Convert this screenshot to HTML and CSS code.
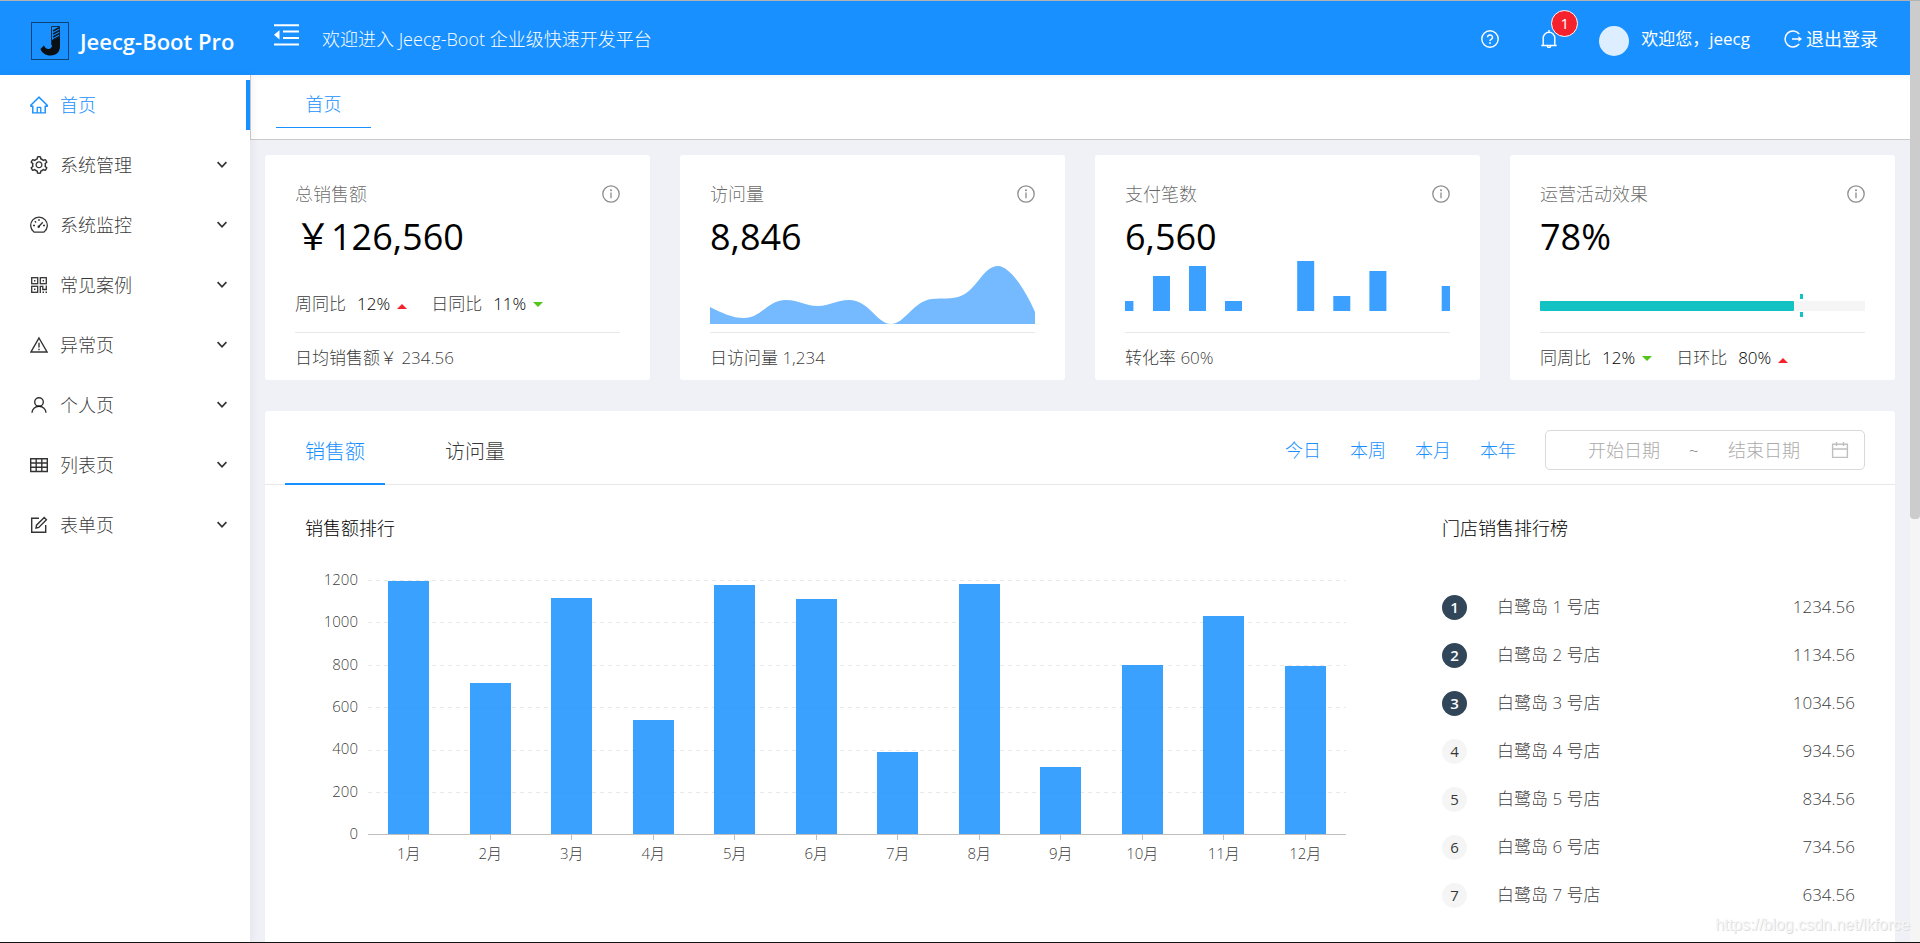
FILE: index.html
```html
<!DOCTYPE html>
<html lang="zh-CN">
<head>
<meta charset="utf-8">
<title>Jeecg-Boot Pro</title>
<link rel="stylesheet" href="styles.css">
</head>
<body>
<svg class="sprite" aria-hidden="true">
  <symbol id="i-info" viewBox="0 0 18 18"><g fill="none" stroke="currentColor" stroke-width="1.3"><circle cx="9" cy="9" r="8.2"/><path d="M9 7.6v5.6"/></g><circle cx="9" cy="5.3" r="1" fill="currentColor"/></symbol>
  <symbol id="i-down" viewBox="0 0 10 8"><path d="M.6 1.2 5 5.8 9.4 1.2" fill="none" stroke="currentColor" stroke-width="1.7"/></symbol>
</svg>
<div class="viewport">
  <div class="app">
    <header class="header">
      <a class="brand" href="#">
        <svg class="brand-logo" viewBox="0 0 38 38" aria-hidden="true">
          <rect x=".5" y=".5" width="37" height="37" fill="none" stroke="#0d4478"/>
          <path d="M20.5 4.500h8v20" fill="none" stroke="#0d3050" stroke-width="1"/>
          <path d="M20.5 4.500V23" fill="none" stroke="#0d3050" stroke-width="1"/>
          <path d="M21 18l8-3v9c0 6-3.500 9.500-9.500 9.500-5 0-8.500-2.500-10-6.500l3.500-3.500c1 2.500 2.500 3.500 4.500 3.500s3.500-1.500 3.500-4z" fill="#0a0f14"/>
          <path d="M22 9l6.500-3.500M22 12l6.500-3.500M22 15l6.500-3.500M22 18l6.500-3.500" stroke="#0a1c30" stroke-width="1.600"/>
        </svg>
        <span class="brand-name">Jeecg-Boot Pro</span>
      </a>
      <button class="fold" type="button" aria-label="折叠菜单">
        <svg viewBox="0 0 25 22" aria-hidden="true"><path d="M0 1.200h25M9 7.500h16M9 14h16M0 20.500h25" fill="none" stroke="currentColor" stroke-width="2"/><path d="M0 10.800 5.500 6.200v9.200z" fill="currentColor"/></svg>
      </button>
      <p class="welcome">欢迎进入 Jeecg-Boot 企业级快速开发平台</p>
      <div class="tools">
        <a class="tool" href="#" aria-label="帮助"><svg class="icon" viewBox="0 0 18 18" aria-hidden="true"><g fill="none" stroke="currentColor" stroke-width="1.400"><circle cx="9" cy="9" r="8.200"/><path d="M6.500 7.200a2.500 2.300 0 1 1 3.600 2.100c-.8.400-1.100.8-1.100 1.700"/></g><circle cx="9" cy="13" r=".9" fill="currentColor"/></svg></a>
        <a class="tool bell" href="#" aria-label="通知"><svg class="icon" viewBox="0 0 18 18" aria-hidden="true"><path d="M1.300 15.500h15.400M3.200 15.500V8a5.800 5.800 0 0 1 11.600 0v7.500M9 2.300V0M7.300 15.800a1.700 1.800 0 0 0 3.400 0" fill="none" stroke="currentColor" stroke-width="1.400"/></svg><span class="badge">1</span></a>
        <a class="user" href="#"><span class="avatar"></span>欢迎您，jeecg</a>
        <a class="logout" href="#"><svg class="icon" viewBox="0 0 18 18" aria-hidden="true"><path d="M15.200 3.900A8 8 0 1 0 15.200 14.100M8 9h8" fill="none" stroke="currentColor" stroke-width="1.500"/><path d="M14.500 6.300 18 9l-3.500 2.700z" fill="currentColor"/></svg>退出登录</a>
      </div>
    </header>
    <div class="body">
      <nav class="sidebar" aria-label="主菜单">
        <ul class="menu">
          <li><a class="menu-item is-active" href="#"><svg class="icon" viewBox="64 64 896 896" aria-hidden="true"><path fill="currentColor" d="M946.5 505L560.1 118.8l-25.9-25.9a31.5 31.5 0 0 0-44.4 0L77.500 505a63.900 63.900 0 0 0-18.800 46c.4 35.200 29.700 63.300 64.900 63.300h42.500V940h691.800V614.300h43.400c17.100 0 33.200-6.700 45.300-18.800a63.600 63.600 0 0 0 18.700-45.300c0-17-6.700-33.100-18.800-45.200zM568 868H456V664h112v204zm217.900-325.700V868H632V640c0-22.100-17.900-40-40-40H432c-22.100 0-40 17.900-40 40v228H238.100V542.300h-96l370-369.700 23.100 23.100L882 542.300h-96.100z"/></svg><span>首页</span></a></li>
          <li><a class="menu-item" href="#"><svg class="icon" viewBox="64 64 896 896" aria-hidden="true"><path fill="currentColor" d="M924.8 625.7l-65.5-56c3.1-19 4.7-38.4 4.7-57.8s-1.6-38.8-4.7-57.8l65.5-56a32.03 32.03 0 0 0 9.3-35.2l-.9-2.6a443.740 443.740 0 0 0-79.7-137.9l-1.8-2.1a32.120 32.120 0 0 0-35.1-9.5l-81.3 28.9c-30-24.6-63.5-44-99.7-57.6l-15.7-85a32.050 32.050 0 0 0-25.8-25.7l-2.7-.5c-52.1-9.4-106.9-9.4-159 0l-2.7.5a32.050 32.050 0 0 0-25.8 25.7l-15.8 85.4a351.860 351.860 0 0 0-99 57.4l-81.9-29.1a32 32 0 0 0-35.1 9.5l-1.8 2.1a446.020 446.020 0 0 0-79.7 137.9l-.9 2.6c-4.5 12.5-.8 26.5 9.3 35.2l66.3 56.6c-3.1 18.8-4.6 38-4.6 57.1 0 19.2 1.5 38.4 4.6 57.1L99 625.5a32.030 32.030 0 0 0-9.3 35.2l.9 2.6c18.1 50.4 44.9 96.9 79.7 137.9l1.8 2.1a32.120 32.120 0 0 0 35.1 9.5l81.9-29.1c29.8 24.5 63.1 43.9 99 57.4l15.8 85.4a32.050 32.050 0 0 0 25.8 25.7l2.7.5a449.400 449.400 0 0 0 159 0l2.7-.5a32.050 32.050 0 0 0 25.8-25.7l15.7-85a350 350 0 0 0 99.7-57.6l81.3 28.9a32 32 0 0 0 35.1-9.5l1.8-2.1c34.8-41.1 61.6-87.5 79.7-137.9l.9-2.6c4.5-12.3.8-26.3-9.3-35zM788.3 465.9c2.5 15.1 3.8 30.6 3.8 46.1s-1.3 31-3.8 46.1l-6.6 40.1 74.7 63.9a370.030 370.030 0 0 1-42.6 73.6L721 702.8l-31.4 25.8c-23.9 19.6-50.5 35-79.3 45.8l-38.1 14.3-17.9 97a377.500 377.500 0 0 1-85 0l-17.9-97.2-37.8-14.5c-28.5-10.8-55-26.2-78.7-45.7l-31.4-25.9-93.4 33.2c-17-22.9-31.2-47.6-42.6-73.6l75.5-64.5-6.5-40c-2.4-14.9-3.7-30.3-3.7-45.5 0-15.3 1.2-30.6 3.7-45.5l6.5-40-75.5-64.5c11.3-26.1 25.6-50.7 42.6-73.6l93.4 33.2 31.4-25.9c23.7-19.5 50.2-34.9 78.7-45.7l37.9-14.3 17.9-97.2c28.1-3.2 56.8-3.2 85 0l17.9 97 38.1 14.3c28.7 10.8 55.4 26.2 79.3 45.8l31.4 25.8 92.8-32.9c17 22.9 31.2 47.6 42.6 73.6L781.8 426l6.5 39.9zM512 326c-97.2 0-176 78.8-176 176s78.8 176 176 176 176-78.8 176-176-78.8-176-176-176zm79.2 255.2A111.600 111.600 0 0 1 512 614c-29.9 0-58-11.7-79.2-32.8A111.600 111.600 0 0 1 400 502c0-29.9 11.7-58 32.8-79.2C454 401.6 482.1 390 512 390c29.9 0 58 11.6 79.2 32.8A111.600 111.600 0 0 1 624 502c0 29.9-11.7 58-32.8 79.2z"/></svg><span>系统管理</span><svg class="chevron" aria-hidden="true"><use href="#i-down"/></svg></a></li>
          <li><a class="menu-item" href="#"><svg class="icon" viewBox="0 0 18 18" aria-hidden="true"><path d="M4.200 16.200a8.300 8.300 0 1 1 9.600 0zM9 3v2M3 9.500h2M13 9.500h2M4.800 5.200l1.300 1.300M8.800 10.500l4-4.300" fill="none" stroke="currentColor" stroke-width="1.300"/><circle cx="8.700" cy="10.800" r="1.200" fill="currentColor"/></svg><span>系统监控</span><svg class="chevron" aria-hidden="true"><use href="#i-down"/></svg></a></li>
          <li><a class="menu-item" href="#"><svg class="icon" viewBox="0 0 18 18" aria-hidden="true"><g fill="none" stroke="currentColor" stroke-width="1.300"><rect x="1.700" y="1.700" width="6" height="6"/><rect x="10.300" y="1.700" width="6" height="6"/><rect x="1.700" y="10.300" width="6" height="6"/><path d="M10.300 17v-6.700h2.500v3.200h3.500v-3.900"/></g><path d="M4 4h1.400v1.400H4zM12.600 4H14v1.400h-1.400zM4 12.600h1.400V14H4zM12.500 15.600H14V17h-1.500zM15.500 15.600H17V17h-1.500z" fill="currentColor"/></svg><span>常见案例</span><svg class="chevron" aria-hidden="true"><use href="#i-down"/></svg></a></li>
          <li><a class="menu-item" href="#"><svg class="icon" viewBox="0 0 18 18" aria-hidden="true"><path d="M9 2 17 16H1zM9 6.800v4.700M9 12.700v1.500" fill="none" stroke="currentColor" stroke-width="1.400"/></svg><span>异常页</span><svg class="chevron" aria-hidden="true"><use href="#i-down"/></svg></a></li>
          <li><a class="menu-item" href="#"><svg class="icon" viewBox="0 0 18 18" aria-hidden="true"><g fill="none" stroke="currentColor" stroke-width="1.400"><circle cx="9" cy="6" r="4.300"/><path d="M2 16.800a7 6.500 0 0 1 14 0"/></g></svg><span>个人页</span><svg class="chevron" aria-hidden="true"><use href="#i-down"/></svg></a></li>
          <li><a class="menu-item" href="#"><svg class="icon" viewBox="0 0 18 18" aria-hidden="true"><path d="M.7 2.700h16.600v12.800H.7zM.7 7h16.600M.7 11.200h16.600M6.200 2.700v12.800M11.800 2.700v12.800" fill="none" stroke="currentColor" stroke-width="1.400"/></svg><span>列表页</span><svg class="chevron" aria-hidden="true"><use href="#i-down"/></svg></a></li>
          <li><a class="menu-item" href="#"><svg class="icon" viewBox="0 0 18 18" aria-hidden="true"><path d="M9 2.200H1.700v14h14V9M6 12l.5-2.800 7.700-7.700 2.200 2.200-7.600 7.700z" fill="none" stroke="currentColor" stroke-width="1.400"/></svg><span>表单页</span><svg class="chevron" aria-hidden="true"><use href="#i-down"/></svg></a></li>
        </ul>
      </nav>
      <div class="main">
        <div class="page-tabs"><button class="page-tab" type="button">首页</button></div>
        <main class="content">
          <section class="cards">
            <article class="card">
              <div class="card-head"><h2 class="card-title">总销售额</h2><svg class="info" aria-hidden="true"><use href="#i-info"/></svg></div>
              <p class="card-value">￥126,560</p>
              <div class="card-chart"><div class="trends"><span class="trend">周同比<b class="trend-num">12%</b><i class="caret up"></i></span><span class="trend">日同比<b class="trend-num">11%</b><i class="caret down"></i></span></div></div>
              <p class="card-foot">日均销售额￥ 234.56</p>
            </article>
            <article class="card">
              <div class="card-head"><h2 class="card-title">访问量</h2><svg class="info" aria-hidden="true"><use href="#i-info"/></svg></div>
              <p class="card-value">8,846</p>
              <div class="card-chart"><svg class="area" viewBox="0 0 325 58" preserveAspectRatio="none" aria-hidden="true"><path fill="#75baff" d="M0 41C12 47 22 52 34 52C51 52 58 34 76 34C90 34 94 40 108 40C120 40 126 34 139 34C159 34 167 58 181 58C195 58 203 35 222 33C232 32 242 33 248 31C267 26 272 0 288 0C300 0 316 25 325 46V58H0Z"/></svg></div>
              <p class="card-foot">日访问量 1,234</p>
            </article>
            <article class="card">
              <div class="card-head"><h2 class="card-title">支付笔数</h2><svg class="info" aria-hidden="true"><use href="#i-info"/></svg></div>
              <p class="card-value">6,560</p>
              <div class="card-chart bars-box"><svg class="mini-bars" viewBox="0 0 325 50" preserveAspectRatio="none" aria-hidden="true"><path fill="#3ba0ff" d="M0 40h8.400v10H0zM28 15h17v35H28zM64 5h17v45H64zM100 40h17v10h-17zM172.200 0h17v50h-17zM208.300 35h17v15h-17zM244.400 10h17v40h-17zM316.700 25H325v25h-8.300z"/></svg></div>
              <p class="card-foot">转化率 60%</p>
            </article>
            <article class="card">
              <div class="card-head"><h2 class="card-title">运营活动效果</h2><svg class="info" aria-hidden="true"><use href="#i-info"/></svg></div>
              <p class="card-value">78%</p>
              <div class="card-chart progress-box"><div class="progress"><div class="progress-fill" style="width:78%"></div><span class="target" style="left:80%"></span></div></div>
              <div class="card-foot"><div class="trends"><span class="trend">同周比<b class="trend-num">12%</b><i class="caret down"></i></span><span class="trend">日环比<b class="trend-num">80%</b><i class="caret up"></i></span></div></div>
            </article>
          </section>
          <section class="panel">
            <div class="panel-head">
              <div class="tabs"><button class="tab is-active" type="button">销售额</button><button class="tab" type="button">访问量</button></div>
              <div class="range">
                <a href="#">今日</a><a href="#">本周</a><a href="#">本月</a><a href="#">本年</a>
                <div class="picker">
                  <input type="text" placeholder="开始日期" aria-label="开始日期"><span class="tilde">~</span><input type="text" placeholder="结束日期" aria-label="结束日期">
                  <svg class="calendar" viewBox="0 0 18 18" aria-hidden="true"><path d="M1.600 3.200h14.800v13.200H1.600zM1.600 8h14.800M5.500 1v4M12.500 1v4" fill="none" stroke="currentColor" stroke-width="1.400"/></svg>
                </div>
              </div>
            </div>
            <div class="panel-body">
              <div class="sales">
                <h3 class="sub-title">销售额排行</h3>
                <div class="chart">
                  <div class="y-axis"><span>1200</span><span>1000</span><span>800</span><span>600</span><span>400</span><span>200</span><span>0</span></div>
                  <div class="plot">
                    <div class="plot-area">
                      <div class="grid-lines"><i></i><i></i><i></i><i></i><i></i><i></i></div>
                      <div class="bars">
                        <div class="bar" style="height:99.500%"></div><div class="bar" style="height:59.500%"></div><div class="bar" style="height:92.900%"></div><div class="bar" style="height:44.900%"></div><div class="bar" style="height:98.100%"></div><div class="bar" style="height:92.700%"></div><div class="bar" style="height:32.400%"></div><div class="bar" style="height:98.400%"></div><div class="bar" style="height:26.400%"></div><div class="bar" style="height:66.500%"></div><div class="bar" style="height:86%"></div><div class="bar" style="height:66.300%"></div>
                      </div>
                    </div>
                    <div class="x-axis"><span>1月</span><span>2月</span><span>3月</span><span>4月</span><span>5月</span><span>6月</span><span>7月</span><span>8月</span><span>9月</span><span>10月</span><span>11月</span><span>12月</span></div>
                  </div>
                </div>
              </div>
              <div class="ranking">
                <h3 class="sub-title">门店销售排行榜</h3>
                <ol class="rank-list">
                  <li><span class="rank top">1</span><span class="shop">白鹭岛 1 号店</span><span>1234.56</span></li>
                  <li><span class="rank top">2</span><span class="shop">白鹭岛 2 号店</span><span>1134.56</span></li>
                  <li><span class="rank top">3</span><span class="shop">白鹭岛 3 号店</span><span>1034.56</span></li>
                  <li><span class="rank">4</span><span class="shop">白鹭岛 4 号店</span><span>934.56</span></li>
                  <li><span class="rank">5</span><span class="shop">白鹭岛 5 号店</span><span>834.56</span></li>
                  <li><span class="rank">6</span><span class="shop">白鹭岛 6 号店</span><span>734.56</span></li>
                  <li><span class="rank">7</span><span class="shop">白鹭岛 7 号店</span><span>634.56</span></li>
                </ol>
              </div>
            </div>
          </section>
        </main>
      </div>
    </div>
  </div>
  <div class="scroll-track" aria-hidden="true"><div class="scroll-thumb"></div></div>
  <span class="watermark">https://blog.csdn.net/lkforce</span>
</div>
</body>
</html>
```
FILE: styles.css
```css
* { box-sizing: border-box; }

body {
  margin: 0;
  font-family: "Open Sans", "Noto Sans CJK SC", sans-serif;
  font-size: 17px;
  font-weight: 300;
  line-height: 26px;
  color: rgba(0, 0, 0, .8);
  background: #eff1f6;
}

h2, h3, p, ul, ol { margin: 0; padding: 0; font-weight: inherit; }
ul, ol { list-style: none; }
a { color: inherit; text-decoration: none; }
button, input { font: inherit; color: inherit; border: 0; background: none; padding: 0; }

.sprite { position: absolute; width: 0; height: 0; }
.icon { width: 18px; height: 18px; flex: none; }

.viewport {
  position: relative;
  display: flex;
  height: 100vh;
  overflow: hidden;
  border-top: 1px solid #b3b3b3;
  border-bottom: 1px solid #111;
}
.app { flex: 1; min-width: 0; display: flex; flex-direction: column; }

/* Header */
.header {
  display: flex;
  align-items: center;
  height: 74px;
  flex: none;
  background: #1890ff;
  color: #fff;
  font-weight: 400;
}
.brand { display: flex; align-items: center; gap: 11px; width: 274px; padding: 6px 0 0 31px; }
.brand-logo { width: 38px; height: 38px; }
.brand-name { font-size: 22px; font-weight: 600; }
.fold { width: 25px; height: 22px; margin-bottom: 6px; cursor: pointer; }
.fold svg { display: block; width: 25px; height: 22px; }
.welcome { margin-left: 23px; padding-top: 2px; font-size: 18px; font-weight: 300; }
.tools { display: flex; align-items: center; margin-left: auto; padding: 2px 32px 0 0; }
.tool { position: relative; display: flex; margin-right: 41px; }
.badge {
  position: absolute;
  left: 11px;
  top: -20px;
  width: 27px;
  height: 27px;
  border: 1px solid #fff;
  border-radius: 50%;
  background: #f5222d;
  font-size: 15px;
  line-height: 25px;
  text-align: center;
}
.user { display: flex; align-items: center; gap: 12px; margin-right: 34px; }
.avatar { width: 30px; height: 30px; margin-top: 4px; border-radius: 50%; background: #dceeff; }
.logout { display: flex; align-items: center; gap: 4px; font-size: 18px; }

/* Sidebar */
.body { flex: 1; min-height: 0; display: flex; }
.sidebar {
  position: relative;
  width: 250px;
  flex: none;
  background: #fff;
  box-shadow: 2px 0 8px rgba(29, 35, 41, .06);
}
.menu { display: flex; flex-direction: column; gap: 10px; padding-top: 5px; }
.menu-item {
  display: flex;
  align-items: center;
  gap: 12px;
  height: 50px;
  padding: 0 23px 0 30px;
  font-size: 18px;
}
.menu-item.is-active { color: #1890ff; border-right: 4px solid #1890ff; }
.chevron { width: 10px; height: 8px; margin-left: auto; }

/* Page tabs */
.main { flex: 1; min-width: 0; display: flex; flex-direction: column; }
.page-tabs {
  height: 65px;
  flex: none;
  padding-left: 25px;
  border-left: 1px solid #ccc;
  border-bottom: 1px solid #c8ccc9;
  background: linear-gradient(#f6f7f8, #fff 6px);
}
.page-tab {
  width: 95px;
  height: 53px;
  padding-top: 6px;
  border-bottom: 1px solid #1890ff;
  color: #1890ff;
  font-size: 18px;
}

.content { flex: 1; min-height: 0; overflow: hidden; padding: 15px 15px 0; }

/* Summary cards */
.cards { display: grid; grid-template-columns: repeat(4, 1fr); gap: 30px; }
.card { padding: 26px 30px 9px; border-radius: 3px; background: #fff; }
.card-head { display: flex; align-items: center; justify-content: space-between; }
.card-title { font-size: 18px; color: rgba(0, 0, 0, .6); }
.info { width: 18px; height: 18px; color: rgba(0, 0, 0, .45); }
.card-value { font-size: 36px; line-height: 60px; font-weight: 400; color: #000; }
.card-chart { display: flex; align-items: flex-end; height: 57px; margin-bottom: 8px; }
.card-chart:has(.trends) { padding-bottom: 7px; }
.bars-box { padding-bottom: 13px; }
.progress-box { padding-bottom: 13px; }
.card-foot { padding-top: 12px; border-top: 1px solid #e8e8e8; line-height: 26px; }
.area { width: 100%; height: 58px; flex: none; }
.mini-bars { width: 100%; height: 50px; }
.trends { display: flex; gap: 24px; }
.trend { display: flex; align-items: center; }
.trend-num { margin: 0 7px 0 11px; font-weight: 300; color: #000; }
.caret { border: 5px solid transparent; }
.caret.up { border-top: 0; border-bottom-color: #f5222d; margin-top: 4px; }
.caret.down { border-bottom: 0; border-top-color: #52c41a; }
.progress { position: relative; flex: 1; height: 10px; background: #f5f5f5; }
.progress-fill { height: 10px; border-radius: 1px; background: #13c2c2; }
.target {
  position: absolute;
  top: -7px;
  width: 3px;
  height: 23px;
  background: linear-gradient(#13c2c2 5px, transparent 5px 18px, #13c2c2 18px);
}

/* Sales panel */
.panel { margin-top: 31px; border-radius: 3px; background: #fff; height: 640px; }
.panel-head {
  display: flex;
  justify-content: space-between;
  height: 74px;
  padding: 0 30px 0 20px;
  border-bottom: 1px solid #e8e8e8;
}
.tabs { display: flex; gap: 40px; }
.tab { width: 100px; height: 74px; padding-top: 10px; font-size: 20px; border-bottom: 2px solid transparent; }
.tab.is-active { color: #1890ff; border-bottom-color: #1890ff; }
.range { display: flex; align-items: center; gap: 29px; padding-top: 5px; color: #1890ff; font-size: 18px; }
.picker {
  display: flex;
  align-items: center;
  width: 320px;
  height: 40px;
  padding: 0 15px 0 20px;
  border: 1px solid #d9d9d9;
  border-radius: 5px;
  color: rgba(0, 0, 0, .45);
}
.picker input { width: 116px; text-align: center; }
.picker input::placeholder { color: #aaa; opacity: 1; }
.tilde { width: 24px; text-align: center; }
.calendar { width: 18px; height: 18px; margin-left: auto; color: #bfbfbf; }

.panel-body { display: flex; justify-content: space-between; gap: 96px; padding: 30px 40px 0; }
.sub-title { font-size: 18px; line-height: 26px; color: #000; }
.sales { flex: 1; }
.chart { display: flex; gap: 10px; margin-top: 39px; }
.y-axis {
  display: flex;
  flex-direction: column;
  justify-content: space-between;
  width: 53px;
  height: 274px;
  margin-top: -11px;
  font-size: 15px;
  line-height: 20px;
  text-align: right;
}
.plot { flex: 1; }
.plot-area { position: relative; height: 255px; border-bottom: 1px solid #bfbfbf; }
.grid-lines { display: flex; flex-direction: column; justify-content: space-between; height: 213px; }
.grid-lines i { height: 1px; background: repeating-linear-gradient(90deg, #e8e8e8 0 4px, transparent 4px 8px); }
.bars {
  position: absolute;
  inset: 0;
  display: grid;
  grid-template-columns: repeat(12, 1fr);
  align-items: end;
  justify-items: center;
}
.bar { width: 50%; background: rgba(24, 144, 255, .85); }
.x-axis { display: grid; grid-template-columns: repeat(12, 1fr); font-size: 15px; line-height: 26px; }
.x-axis span { display: flex; flex-direction: column; align-items: center; }
.x-axis span::before { content: ""; width: 1px; height: 5px; background: #bfbfbf; }

.ranking { width: 413px; }
.rank-list { display: flex; flex-direction: column; gap: 22px; margin-top: 53px; }
.rank-list li { display: flex; align-items: center; }
.rank {
  width: 25px;
  height: 25px;
  border-radius: 50%;
  background: #f5f5f5;
  font-size: 15px;
  line-height: 25px;
  font-weight: 400;
  text-align: center;
}
.rank.top { background: #314659; color: #fff; font-weight: 600; }
.shop { flex: 1; margin-left: 30px; }

/* Window chrome */
.scroll-track { width: 10px; flex: none; background: #f5f5f6; }
.scroll-thumb { height: 55%; border-radius: 0 0 4px 4px; background: #ccc; }
.watermark {
  position: absolute;
  right: 10px;
  bottom: 4px;
  font-family: "Liberation Sans", sans-serif;
  font-size: 16px;
  font-weight: 400;
  color: #f6f6f6;
  text-shadow: 1px 1px 0 #ddd;
}
```
